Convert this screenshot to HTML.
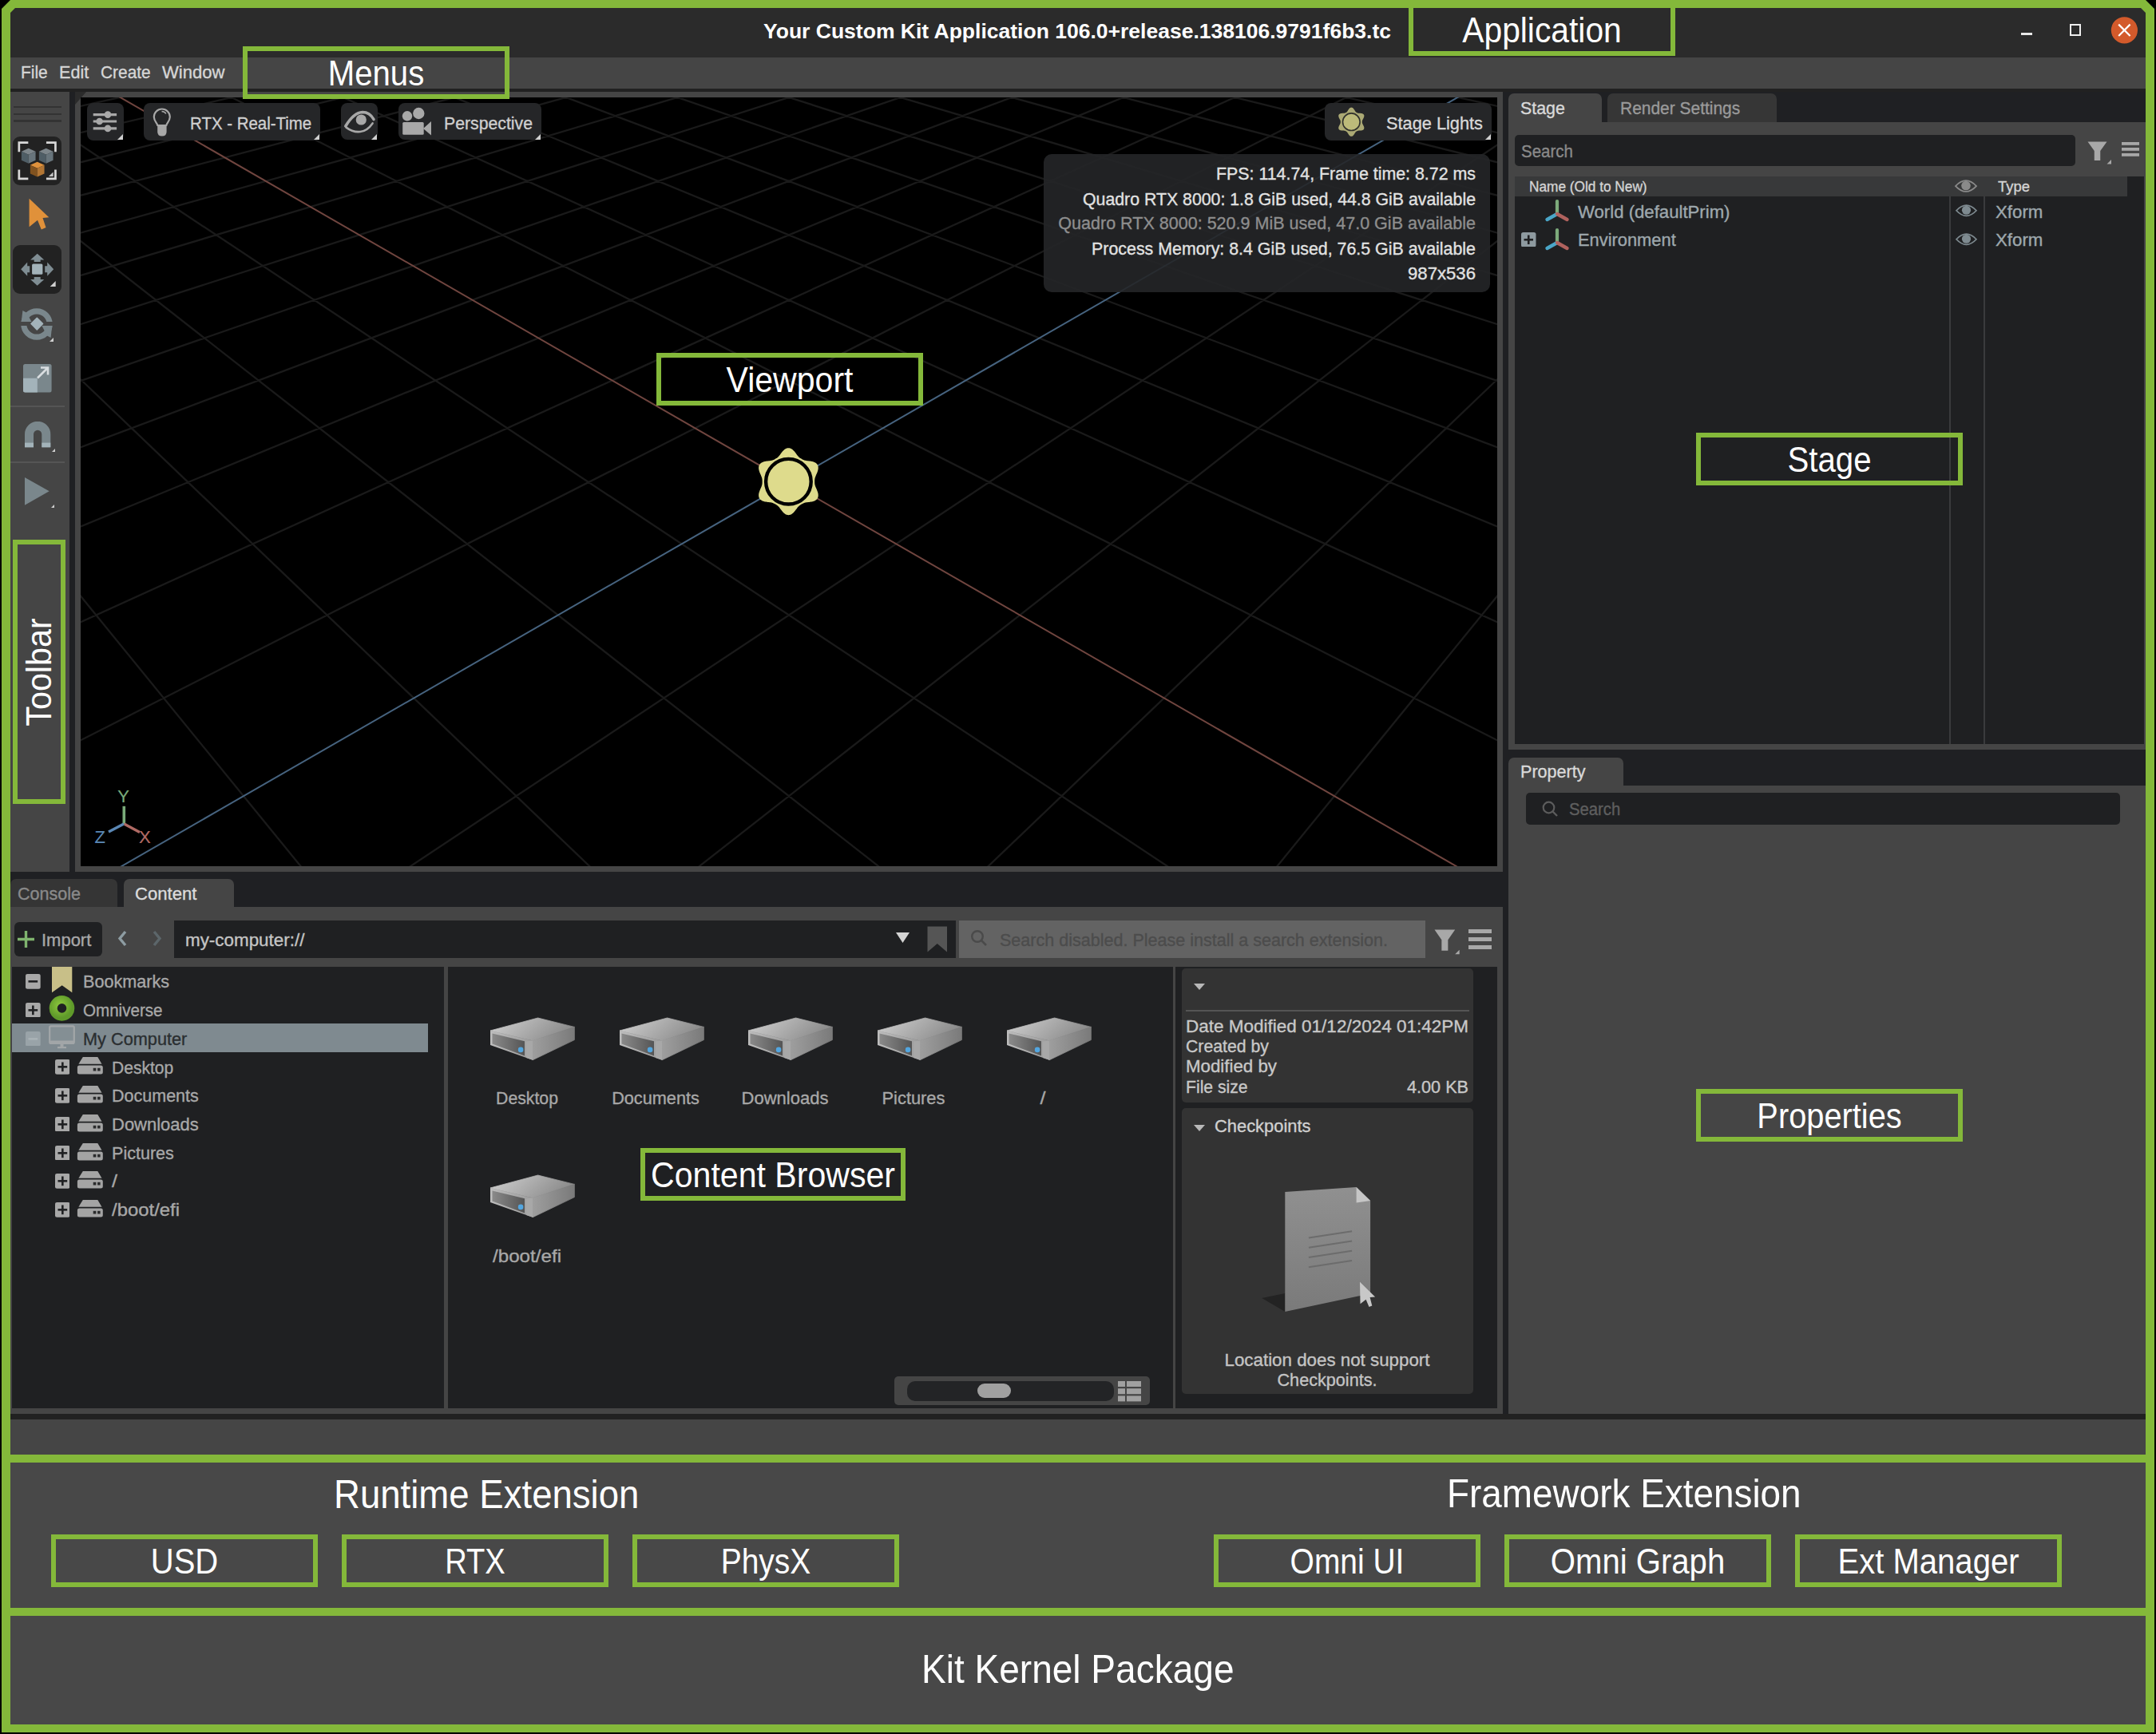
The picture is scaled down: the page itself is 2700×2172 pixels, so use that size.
<!DOCTYPE html><html><head><meta charset="utf-8"><style>html,body{margin:0;padding:0;}body{width:2700px;height:2172px;position:relative;overflow:hidden;background:#000;font-family:"Liberation Sans",sans-serif;}div,svg{box-sizing:border-box;}</style></head><body><div style="position:absolute;left:2px;top:0;width:2696px;height:2170px;background:#84b83a;clip-path:polygon(11px 0,2685px 0,2696px 11px,2696px 2170px,0 2170px,0 11px)"></div><div style="position:absolute;left:13px;top:10px;width:2674px;height:62px;background:#2b2b2b;clip-path:polygon(6px 0,2668px 0,2674px 6px,2674px 62px,0 62px,0 6px)"></div><div style="position:absolute;left:13px;top:72px;width:2674px;height:39px;background:#454545;"></div><div style="position:absolute;left:13px;top:111px;width:2674px;height:4px;background:#212121;"></div><div style="position:absolute;left:13px;top:115px;width:2674px;height:1663px;background:#1f2023;"></div><div style="position:absolute;left:13px;top:115px;width:74px;height:977px;background:#454545;"></div><div style="position:absolute;left:94px;top:115px;width:1788px;height:977px;background:#454545;"></div><svg style="position:absolute;left:94px;top:115px" width="16" height="16"><path d="M0 0H14L0 16Z" fill="#2b2b2b"/></svg><div style="position:absolute;left:101px;top:122px;width:1774px;height:963px;background:#000;"></div><div style="position:absolute;left:1889px;top:153px;width:798px;height:786px;background:#454545;"></div><div style="position:absolute;left:1889px;top:984px;width:798px;height:787px;background:#454545;"></div><div style="position:absolute;left:13px;top:1136px;width:1869px;height:635px;background:#454545;"></div><div style="position:absolute;left:13px;top:1771px;width:2674px;height:7px;background:#212121;"></div><div style="position:absolute;left:13px;top:1778px;width:2674px;height:44px;background:#454545;"></div><div style="position:absolute;left:13px;top:1832px;width:2674px;height:182px;background:#484848;"></div><div style="position:absolute;left:13px;top:2024px;width:2674px;height:136px;background:#484848;"></div><div style="position:absolute;left:956px;top:26.48px;font-size:26.5px;line-height:1;color:#fff;font-weight:bold;white-space:nowrap;transform:scaleX(1.0003);transform-origin:left;">Your Custom Kit Application 106.0+release.138106.9791f6b3.tc</div><div style="position:absolute;left:2531px;top:40.5px;width:14px;height:3.0px;background:#e8e8e8;"></div><div style="position:absolute;left:2592px;top:30px;width:14px;height:15px;border:2px solid #eee;box-sizing:border-box"></div><svg style="position:absolute;left:2640px;top:17px;" width="42" height="42" viewBox="0 0 42 42"><circle cx="20.4" cy="20.8" r="16.6" fill="#d35a2b"/><path d="M13.2 13.6L27.6 28M27.6 13.6L13.2 28" stroke="#fff" stroke-width="2.2"/></svg><div style="position:absolute;left:25.9px;top:79.30px;font-size:22.7px;line-height:1;color:#d6d6d6;font-weight:normal;white-space:nowrap;transform:scaleX(0.9240);transform-origin:left;-webkit-text-stroke:0.35px #d6d6d6;">File</div><div style="position:absolute;left:74.3px;top:79.30px;font-size:22.7px;line-height:1;color:#d6d6d6;font-weight:normal;white-space:nowrap;transform:scaleX(0.9510);transform-origin:left;-webkit-text-stroke:0.35px #d6d6d6;">Edit</div><div style="position:absolute;left:126px;top:79.30px;font-size:22.7px;line-height:1;color:#d6d6d6;font-weight:normal;white-space:nowrap;transform:scaleX(0.9202);transform-origin:left;-webkit-text-stroke:0.35px #d6d6d6;">Create</div><div style="position:absolute;left:203.3px;top:79.30px;font-size:22.7px;line-height:1;color:#d6d6d6;font-weight:normal;white-space:nowrap;transform:scaleX(0.9723);transform-origin:left;-webkit-text-stroke:0.35px #d6d6d6;">Window</div><div style="position:absolute;left:16.5px;top:132.60000000000002px;width:60.5px;height:2.3999999999999773px;background:#333333;"></div><div style="position:absolute;left:16.5px;top:141.5px;width:60.5px;height:2.3999999999999773px;background:#333333;"></div><div style="position:absolute;left:16.5px;top:150.4px;width:60.5px;height:2.3999999999999773px;background:#333333;"></div><div style="position:absolute;left:13px;top:508.2px;width:68px;height:1.6000000000000227px;background:#555555;"></div><div style="position:absolute;left:13px;top:578.4000000000001px;width:68px;height:1.599999999999909px;background:#555555;"></div><div style="position:absolute;left:16.3px;top:170.8px;width:61px;height:61px;border-radius:9px;background:#222222"></div><svg style="position:absolute;left:16.3px;top:170.8px;" width="61" height="61" viewBox="0 0 61 61"><path d="M7.850000000000001 19.149999999999977V7.649999999999977H19.35 M41.95 7.649999999999977H53.45V19.149999999999977 M7.850000000000001 41.44999999999999V52.94999999999999H19.35 M41.95 52.94999999999999H53.45V41.44999999999999" fill="none" stroke="#d8d8d8" stroke-width="2.7"/><path d="M19.7 14.699999999999989 L28.549999999999997 18.69999999999999 L19.7 22.69999999999999 L10.85 18.69999999999999Z" fill="#7c858a"/><path d="M10.85 18.69999999999999 L19.7 22.69999999999999 L19.7 33.69999999999999 L10.85 29.69999999999999Z" fill="#4f5e66"/><path d="M28.549999999999997 18.69999999999999 L19.7 22.69999999999999 L19.7 33.69999999999999 L28.549999999999997 29.69999999999999Z" fill="#68757c"/><path d="M41.7 14.699999999999989 L50.550000000000004 18.69999999999999 L41.7 22.69999999999999 L32.85 18.69999999999999Z" fill="#7c858a"/><path d="M32.85 18.69999999999999 L41.7 22.69999999999999 L41.7 33.69999999999999 L32.85 29.69999999999999Z" fill="#4f5e66"/><path d="M50.550000000000004 18.69999999999999 L41.7 22.69999999999999 L41.7 33.69999999999999 L50.550000000000004 29.69999999999999Z" fill="#68757c"/><path d="M30.7 31.799999999999983 L39.55 35.79999999999998 L30.7 39.79999999999998 L21.85 35.79999999999998Z" fill="#e0923c"/><path d="M21.85 35.79999999999998 L30.7 39.79999999999998 L30.7 50.499999999999986 L21.85 46.499999999999986Z" fill="#80521f"/><path d="M39.55 35.79999999999998 L30.7 39.79999999999998 L30.7 50.499999999999986 L39.55 46.499999999999986Z" fill="#b27634"/><path d="M50.60000000000001 44.39999999999998V50.099999999999994H44.900000000000006Z" fill="#c4c4c4"/></svg><svg style="position:absolute;left:30px;top:245px;" width="36" height="46" viewBox="0 0 36 46"><path d="M6.6 3.7 L31.3 27.2 L23.5 28 L27.5 40 L21.8 42.4 L17 30.8 L6.6 39.2Z" fill="#e0913a"/></svg><div style="position:absolute;left:16.3px;top:307px;width:61px;height:61px;border-radius:9px;background:#222222"></div><svg style="position:absolute;left:16.3px;top:307px;" width="61" height="61" viewBox="0 0 61 61"><rect x="24.099999999999998" y="23.5" width="13.3" height="13.3" rx="1.5" fill="#a3b3ba"/><path d="M30.7 10.800000000000011 L39.3 18.5 H34.7 V21 H26.7 V18.5 H22.099999999999998Z" fill="#7f8d93"/><path d="M30.7 50.80000000000001 L39.3 43 H34.7 V40 H26.7 V43 H22.099999999999998Z" fill="#7f8d93"/><path d="M10.2 30.19999999999999 L18.2 21.600000000000023 V26.19999999999999 H21.2 V34.19999999999999 H18.2 V38.80000000000001Z" fill="#7f8d93"/><path d="M51.2 30.19999999999999 L43.2 21.600000000000023 V26.19999999999999 H40.2 V34.19999999999999 H43.2 V38.80000000000001Z" fill="#7f8d93"/><path d="M53.7 45V52H46.7Z" fill="#cfcfcf"/></svg><svg style="position:absolute;left:24.3px;top:383.8px;" width="44" height="44" viewBox="0 0 44 44"><defs><clipPath id="rc"><rect x="0" y="0" width="44" height="19"/><rect x="0" y="24.1" width="44" height="20"/></clipPath></defs><circle cx="22" cy="22" r="16.2" fill="none" stroke="#7a878c" stroke-width="7.2" clip-path="url(#rc)"/><path d="M2.8 19 L4.4 4.9 L9 7.6 L15.6 19Z" fill="#7a878c"/><path d="M41.2 24.1 L39.6 39.1 L35 36.4 L28.4 24.1Z" fill="#7a878c"/><path d="M22.3 14.2 L29.6 21.5 L22.3 29 L15 21.5Z" fill="#a3b3ba" stroke="#a3b3ba" stroke-width="1.5" stroke-linejoin="round"/><path d="M43 39V44H38Z" fill="#cfcfcf"/></svg><svg style="position:absolute;left:29px;top:456.4px;" width="36" height="36" viewBox="0 0 36 36"><rect x="0" y="0" width="35.6" height="35.6" rx="2.5" fill="#7a878c"/><path d="M0 17.8H17.8V35.6H2.5A2.5 2.5 0 0 1 0 33.1Z" fill="#a3b3ba"/><path d="M18 17.5L31 4.5M22 4.5H31V13.5" fill="none" stroke="#d8dde0" stroke-width="2.6"/></svg><svg style="position:absolute;left:30.7px;top:528.4px;" width="40" height="40" viewBox="0 0 40 40"><path d="M0 32 V16 A16.15 16.15 0 0 1 32.3 16 V32 H21.3 V16 A5.15 5.15 0 0 0 11 16 V32Z" fill="#7a878c"/><rect x="0" y="26.6" width="11" height="5.8" fill="#a3b3ba"/><rect x="21.3" y="26.6" width="11" height="5.8" fill="#a3b3ba"/><path d="M38 34V38H34Z" fill="#cfcfcf"/></svg><svg style="position:absolute;left:31px;top:597.8px;" width="40" height="40" viewBox="0 0 40 40"><path d="M0 0 L30.7 17.35 L0 34.7Z" fill="#7a878c"/><path d="M37 34V38H33Z" fill="#cfcfcf"/></svg><svg style="position:absolute;left:101px;top:122px" width="1774" height="963" viewBox="101 122 1774 963"><path d="M988.0 -327.2L-10298.0 604.0M988.0 -327.2L12274.0 604.0M1006.1 -325.7L-10966.4 681.3M969.9 -325.7L12942.4 681.3M1024.6 -324.2L-11737.1 770.5M951.4 -324.2L13713.1 770.5M1043.5 -322.6L-12635.6 874.4M932.5 -322.6L14611.6 874.4M1062.7 -321.1L-13696.6 997.1M913.3 -321.1L15672.6 997.1M1082.4 -319.4L-14968.6 1144.3M893.6 -319.4L16944.6 1144.3M1102.4 -317.8L-16521.3 1323.9M873.6 -317.8L18497.3 1323.9M1122.8 -316.1L-18459.3 1548.1M853.2 -316.1L20435.3 1548.1M1143.7 -314.4L-19370.8 1682.4M832.3 -314.4L21346.8 1682.4M1164.9 -312.6L-18871.2 1682.4M811.1 -312.6L20847.2 1682.4M1186.7 -310.8L-18371.6 1682.4M789.3 -310.8L20347.6 1682.4M1208.9 -309.0L-17872.0 1682.4M767.1 -309.0L19848.0 1682.4M1231.5 -307.1L-17372.4 1682.4M744.5 -307.1L19348.4 1682.4M1254.7 -305.2L-16872.8 1682.4M721.3 -305.2L18848.8 1682.4M1278.4 -303.3L-16373.2 1682.4M697.6 -303.3L18349.2 1682.4M1302.5 -301.3L-15873.6 1682.4M673.5 -301.3L17849.6 1682.4M1327.3 -299.2L-15374.0 1682.4M648.7 -299.2L17350.0 1682.4M1352.6 -297.1L-14874.4 1682.4M623.4 -297.1L16850.4 1682.4M1378.5 -295.0L-14374.7 1682.4M597.5 -295.0L16350.7 1682.4M1404.9 -292.8L-13875.1 1682.4M571.1 -292.8L15851.1 1682.4M1432.1 -290.6L-13375.5 1682.4M543.9 -290.6L15351.5 1682.4M1459.8 -288.3L-12875.9 1682.4M516.2 -288.3L14851.9 1682.4M1488.2 -286.0L-12376.3 1682.4M487.8 -286.0L14352.3 1682.4M1517.3 -283.5L-11876.7 1682.4M458.7 -283.5L13852.7 1682.4M1547.2 -281.1L-11377.1 1682.4M428.8 -281.1L13353.1 1682.4M1577.7 -278.6L-10877.5 1682.4M398.3 -278.6L12853.5 1682.4M1609.1 -276.0L-10377.9 1682.4M366.9 -276.0L12353.9 1682.4M1641.2 -273.3L-9878.3 1682.4M334.8 -273.3L11854.3 1682.4M1674.2 -270.6L-9378.7 1682.4M301.8 -270.6L11354.7 1682.4M1708.1 -267.8L-8879.1 1682.4M267.9 -267.8L10855.1 1682.4M1742.8 -264.9L-8379.5 1682.4M233.2 -264.9L10355.5 1682.4M1778.5 -262.0L-7879.9 1682.4M197.5 -262.0L9855.9 1682.4M1815.2 -259.0L-7380.3 1682.4M160.8 -259.0L9356.3 1682.4M1852.9 -255.9L-6880.7 1682.4M123.1 -255.9L8856.7 1682.4M1891.6 -252.7L-6381.1 1682.4M84.4 -252.7L8357.1 1682.4M1931.5 -249.4L-5881.5 1682.4M44.5 -249.4L7857.5 1682.4M1972.5 -246.0L-5381.9 1682.4M3.5 -246.0L7357.9 1682.4M2014.7 -242.5L-4882.3 1682.4M-38.7 -242.5L6858.3 1682.4M2058.2 -238.9L-4382.7 1682.4M-82.2 -238.9L6358.7 1682.4M2102.9 -235.2L-3883.1 1682.4M-126.9 -235.2L5859.1 1682.4M2149.1 -231.4L-3383.5 1682.4M-173.1 -231.4L5359.5 1682.4M2196.7 -227.5L-2883.9 1682.4M-220.7 -227.5L4859.9 1682.4M2245.8 -223.4L-2384.3 1682.4M-269.8 -223.4L4360.3 1682.4M2296.5 -219.3L-1884.7 1682.4M-320.5 -219.3L3860.7 1682.4M2348.9 -214.9L-1385.1 1682.4M-372.9 -214.9L3361.1 1682.4M2458.9 -205.9L-385.9 1682.4M-482.9 -205.9L2361.9 1682.4M2516.8 -201.1L113.7 1682.4M-540.8 -201.1L1862.3 1682.4M2576.7 -196.1L613.3 1682.4M-600.7 -196.1L1362.7 1682.4M2638.7 -191.0L1112.9 1682.4M-662.7 -191.0L863.1 1682.4M2703.0 -185.7L1612.5 1682.4M-727.0 -185.7L363.5 1682.4M2769.6 -180.2L2112.1 1682.4M-793.6 -180.2L-136.1 1682.4M2838.8 -174.5L2611.7 1682.4M-862.8 -174.5L-635.7 1682.4M2910.6 -168.6L3111.3 1682.4M-934.6 -168.6L-1135.3 1682.4M2985.3 -162.4L3610.9 1682.4M-1009.3 -162.4L-1634.9 1682.4M3062.9 -156.0L4110.5 1682.4M-1086.9 -156.0L-2134.5 1682.4M3143.7 -149.4L4610.1 1682.4M-1167.7 -149.4L-2634.1 1682.4M3227.8 -142.4L5109.7 1682.4M-1251.8 -142.4L-3133.7 1682.4M3315.6 -135.2L5609.3 1682.4M-1339.6 -135.2L-3633.3 1682.4M3407.1 -127.6L6108.9 1682.4M-1431.1 -127.6L-4132.9 1682.4M3502.7 -119.7L6608.5 1682.4M-1526.7 -119.7L-4632.5 1682.4M3602.6 -111.5L7108.1 1682.4M-1626.6 -111.5L-5132.1 1682.4M3707.2 -102.9L7607.7 1682.4M-1731.2 -102.9L-5631.7 1682.4M3816.8 -93.8L8107.3 1682.4M-1840.8 -93.8L-6131.3 1682.4M3931.7 -84.3L8606.9 1682.4M-1955.7 -84.3L-6630.9 1682.4M4052.3 -74.4L9106.5 1682.4M-2076.3 -74.4L-7130.5 1682.4M4179.1 -63.9L9606.1 1682.4M-2203.1 -63.9L-7630.1 1682.4M4312.5 -52.9L10105.7 1682.4M-2336.5 -52.9L-8129.7 1682.4M4453.2 -41.3L10605.3 1682.4M-2477.2 -41.3L-8629.3 1682.4M4601.7 -29.1L11104.9 1682.4M-2625.7 -29.1L-9128.9 1682.4M4758.6 -16.1L11604.5 1682.4M-2782.6 -16.1L-9628.5 1682.4M4924.8 -2.4L12104.1 1682.4M-2948.8 -2.4L-10128.1 1682.4M5101.0 12.1L12603.7 1682.4M-3125.0 12.1L-10627.7 1682.4M5288.2 27.6L13103.3 1682.4M-3312.2 27.6L-11127.3 1682.4M5487.4 44.0L13602.9 1682.4M-3511.4 44.0L-11626.9 1682.4M5699.9 61.6L14102.5 1682.4M-3723.9 61.6L-12126.5 1682.4M5927.1 80.3L14602.1 1682.4M-3951.1 80.3L-12626.1 1682.4M6170.4 100.4L15101.7 1682.4M-4194.4 100.4L-13125.7 1682.4M6431.7 121.9L15601.3 1682.4M-4455.7 121.9L-13625.3 1682.4M6713.0 145.2L16100.9 1682.4M-4737.0 145.2L-14124.9 1682.4M7016.8 170.2L16600.5 1682.4M-5040.8 170.2L-14624.5 1682.4M7345.9 197.4L17100.2 1682.4M-5369.9 197.4L-15124.2 1682.4M7703.5 226.9L17599.8 1682.4M-5727.5 226.9L-15623.8 1682.4M8093.5 259.1L18099.4 1682.4M-6117.5 259.1L-16123.4 1682.4M8520.6 294.3L18599.0 1682.4M-6544.6 294.3L-16623.0 1682.4M8990.3 333.1L19098.6 1682.4M-7014.3 333.1L-17122.6 1682.4M9509.2 375.9L19598.2 1682.4M-7533.2 375.9L-17622.2 1682.4M10085.6 423.4L20097.8 1682.4M-8109.6 423.4L-18121.8 1682.4M10729.5 476.6L20597.4 1682.4M-8753.5 476.6L-18621.4 1682.4M11453.7 536.3L21097.0 1682.4M-9477.7 536.3L-19121.0 1682.4M12274.0 604.0L21596.6 1682.4M-10298.0 604.0L-19620.6 1682.4" stroke="#1a1a1a" stroke-width="2.3" fill="none"/><path d="M2403.0 -210.5L-885.5 1682.4" stroke="#46637f" stroke-width="2"/><path d="M-427.0 -210.5L2861.5 1682.4" stroke="#70453f" stroke-width="2"/></svg><svg style="position:absolute;left:101px;top:122px" width="1774" height="963" viewBox="101 122 1774 963"><path d="M1020.20 603.20L1020.20 602.34L1020.22 601.48L1020.28 600.61L1020.40 599.73L1020.60 598.83L1020.87 597.90L1021.22 596.93L1021.63 595.92L1022.08 594.87L1022.57 593.78L1023.06 592.64L1023.53 591.46L1023.96 590.25L1024.31 589.03L1024.57 587.80L1024.70 586.59L1024.70 585.41L1024.55 584.27L1024.24 583.20L1023.77 582.20L1023.15 581.29L1022.37 580.49L1021.46 579.79L1020.44 579.20L1019.32 578.71L1018.13 578.32L1016.89 578.01L1015.63 577.78L1014.38 577.60L1013.15 577.45L1011.95 577.33L1010.81 577.20L1009.74 577.05L1008.73 576.86L1007.79 576.63L1006.91 576.35L1006.08 576.02L1005.30 575.64L1004.54 575.23L1003.80 574.79L1003.06 574.37L1002.32 573.92L1001.60 573.43L1000.90 572.88L1000.22 572.26L999.55 571.56L998.88 570.78L998.21 569.92L997.53 569.00L996.82 568.03L996.08 567.04L995.30 566.04L994.47 565.07L993.58 564.15L992.65 563.31L991.67 562.59L990.64 562.00L989.58 561.56L988.50 561.29L987.40 561.20L986.30 561.29L985.22 561.56L984.16 562.00L983.13 562.59L982.15 563.31L981.22 564.15L980.33 565.07L979.50 566.04L978.72 567.04L977.98 568.03L977.27 569.00L976.59 569.92L975.92 570.78L975.25 571.56L974.58 572.26L973.90 572.88L973.20 573.43L972.48 573.92L971.74 574.37L971.00 574.79L970.26 575.23L969.50 575.64L968.72 576.02L967.89 576.35L967.01 576.63L966.07 576.86L965.06 577.05L963.99 577.20L962.85 577.33L961.65 577.45L960.42 577.60L959.17 577.78L957.91 578.01L956.67 578.32L955.48 578.71L954.36 579.20L953.34 579.79L952.43 580.49L951.65 581.29L951.03 582.20L950.56 583.20L950.25 584.27L950.10 585.41L950.10 586.59L950.23 587.80L950.49 589.03L950.84 590.25L951.27 591.46L951.74 592.64L952.23 593.78L952.72 594.87L953.17 595.92L953.58 596.93L953.93 597.90L954.20 598.83L954.40 599.73L954.52 600.61L954.58 601.48L954.60 602.34L954.60 603.20L954.60 604.06L954.58 604.92L954.52 605.79L954.40 606.67L954.20 607.57L953.93 608.50L953.58 609.47L953.17 610.48L952.72 611.53L952.23 612.62L951.74 613.76L951.27 614.94L950.84 616.15L950.49 617.37L950.23 618.60L950.10 619.81L950.10 620.99L950.25 622.13L950.56 623.20L951.03 624.20L951.65 625.11L952.43 625.91L953.34 626.61L954.36 627.20L955.48 627.69L956.67 628.08L957.91 628.39L959.17 628.62L960.42 628.80L961.65 628.95L962.85 629.07L963.99 629.20L965.06 629.35L966.07 629.54L967.01 629.77L967.89 630.05L968.72 630.38L969.50 630.76L970.26 631.17L971.00 631.61L971.74 632.03L972.48 632.48L973.20 632.97L973.90 633.52L974.58 634.14L975.25 634.84L975.92 635.62L976.59 636.48L977.27 637.40L977.98 638.37L978.72 639.36L979.50 640.36L980.33 641.33L981.22 642.25L982.15 643.09L983.13 643.81L984.16 644.40L985.22 644.84L986.30 645.11L987.40 645.20L988.50 645.11L989.58 644.84L990.64 644.40L991.67 643.81L992.65 643.09L993.58 642.25L994.47 641.33L995.30 640.36L996.08 639.36L996.82 638.37L997.53 637.40L998.21 636.48L998.88 635.62L999.55 634.84L1000.22 634.14L1000.90 633.52L1001.60 632.97L1002.32 632.48L1003.06 632.03L1003.80 631.61L1004.54 631.17L1005.30 630.76L1006.08 630.38L1006.91 630.05L1007.79 629.77L1008.73 629.54L1009.74 629.35L1010.81 629.20L1011.95 629.07L1013.15 628.95L1014.38 628.80L1015.63 628.62L1016.89 628.39L1018.13 628.08L1019.32 627.69L1020.44 627.20L1021.46 626.61L1022.37 625.91L1023.15 625.11L1023.77 624.20L1024.24 623.20L1024.55 622.13L1024.70 620.99L1024.70 619.81L1024.57 618.60L1024.31 617.37L1023.96 616.15L1023.53 614.94L1023.06 613.76L1022.57 612.62L1022.08 611.53L1021.63 610.48L1021.22 609.47L1020.87 608.50L1020.60 607.57L1020.40 606.67L1020.28 605.79L1020.22 604.92L1020.20 604.06Z" fill="#dedb8c"/><circle cx="987.4" cy="603.2" r="28.3" fill="#dedb8c" stroke="#000" stroke-width="4.4"/></svg><div style="position:absolute;left:108.9px;top:129.4px;width:46.0px;height:46.29999999999998px;border-radius:8px;background:#252628"></div><svg style="position:absolute;left:145.9px;top:166.7px;" width="9" height="9" viewBox="0 0 9 9"><path d="M8 1V8H1Z" fill="#d0d0d0"/></svg><svg style="position:absolute;left:108.9px;top:129.4px;" width="46" height="46" viewBox="0 0 46 46"><g stroke="#a8a8a8" stroke-width="3.2"><path d="M7.7 14.6H37.1M7.7 23H37.1M7.7 31.9H37.1"/></g><g fill="#a8a8a8"><circle cx="26" cy="14.6" r="4.3"/><circle cx="15.6" cy="23" r="4.3"/><circle cx="26" cy="31.9" r="4.3"/></g></svg><div style="position:absolute;left:180.1px;top:129.4px;width:220.50000000000003px;height:46.29999999999998px;border-radius:8px;background:#252628"></div><svg style="position:absolute;left:391.6px;top:166.7px;" width="9" height="9" viewBox="0 0 9 9"><path d="M8 1V8H1Z" fill="#d0d0d0"/></svg><svg style="position:absolute;left:188px;top:133px;" width="30" height="40" viewBox="0 0 30 40"><path d="M9.3 24 C8.8 21 5 19 4.8 13.5 A10 10 0 0 1 24.8 13.5 C24.6 19 20.8 21 20.3 24Z" fill="none" stroke="#a8a8a8" stroke-width="2.2"/><path d="M9.2 23.5 H20.6 V32 Q20.6 37.5 14.9 37.5 Q9.2 37.5 9.2 32Z" fill="#a8a8a8"/><path d="M14.5 6.5 Q18.5 6.8 19.8 9.5" fill="none" stroke="#a8a8a8" stroke-width="1.6"/></svg><div style="position:absolute;left:238px;top:143.90px;font-size:22px;line-height:1;color:#cfcfcf;font-weight:normal;white-space:nowrap;transform:scaleX(0.9292);transform-origin:left;-webkit-text-stroke:0.35px #cfcfcf;">RTX - Real-Time</div><div style="position:absolute;left:426.5px;top:129.1px;width:46.5px;height:46.400000000000006px;border-radius:8px;background:#252628"></div><svg style="position:absolute;left:464px;top:166.5px;" width="9" height="9" viewBox="0 0 9 9"><path d="M8 1V8H1Z" fill="#d0d0d0"/></svg><svg style="position:absolute;left:426.5px;top:129.1px;" width="47" height="47" viewBox="0 0 47 47"><path d="M5.8 29 Q16 12 27 11.5 Q36 11.5 41 20.5" fill="none" stroke="#a8a8a8" stroke-width="3.6" stroke-linecap="round"/><path d="M6.5 30.6 Q15 37 24 36 Q33 35 39.6 25.4" fill="none" stroke="#a8a8a8" stroke-width="2.6" stroke-linecap="round"/><circle cx="25.3" cy="21" r="6.6" fill="#a8a8a8"/></svg><div style="position:absolute;left:498.6px;top:129.1px;width:179.19999999999993px;height:46.400000000000006px;border-radius:8px;background:#252628"></div><svg style="position:absolute;left:668.8px;top:166.5px;" width="9" height="9" viewBox="0 0 9 9"><path d="M8 1V8H1Z" fill="#d0d0d0"/></svg><svg style="position:absolute;left:498.6px;top:129.1px;" width="46" height="46" viewBox="0 0 46 46"><circle cx="11" cy="16.3" r="6.2" fill="#a8a8a8"/><circle cx="25.3" cy="13" r="7.2" fill="#a8a8a8"/><rect x="5.2" y="24.1" width="26.5" height="15.6" rx="1.5" fill="#a8a8a8"/><path d="M31 31.9 L41 23 V40.5Z" fill="#a8a8a8"/></svg><div style="position:absolute;left:556.4px;top:143.70px;font-size:22px;line-height:1;color:#cfcfcf;font-weight:normal;white-space:nowrap;transform:scaleX(0.9657);transform-origin:left;-webkit-text-stroke:0.35px #cfcfcf;">Perspective</div><div style="position:absolute;left:1659px;top:129px;width:209px;height:47px;border-radius:8px;background:#252628"></div><svg style="position:absolute;left:1859px;top:167px;" width="9" height="9" viewBox="0 0 9 9"><path d="M8 1V8H1Z" fill="#d0d0d0"/></svg><svg style="position:absolute;left:1659px;top:129px;" width="60" height="47" viewBox="0 0 60 47"><path d="M46.80 23.70L46.80 23.35L46.82 22.99L46.86 22.63L46.94 22.27L47.06 21.89L47.22 21.50L47.41 21.08L47.64 20.65L47.88 20.20L48.14 19.72L48.41 19.22L48.66 18.71L48.89 18.18L49.08 17.64L49.23 17.10L49.32 16.57L49.35 16.05L49.30 15.55L49.17 15.08L48.98 14.65L48.70 14.26L48.36 13.92L47.95 13.63L47.49 13.39L46.98 13.20L46.44 13.06L45.88 12.96L45.30 12.89L44.73 12.85L44.17 12.83L43.62 12.82L43.11 12.81L42.62 12.79L42.17 12.75L41.75 12.69L41.36 12.60L41.01 12.49L40.67 12.35L40.36 12.18L40.05 12.01L39.74 11.83L39.45 11.64L39.16 11.42L38.88 11.17L38.61 10.88L38.35 10.55L38.09 10.17L37.83 9.76L37.56 9.32L37.28 8.86L36.98 8.38L36.66 7.90L36.31 7.44L35.94 7.00L35.55 6.60L35.13 6.26L34.69 5.98L34.24 5.77L33.77 5.64L33.30 5.60L32.83 5.64L32.36 5.77L31.91 5.98L31.47 6.26L31.05 6.60L30.66 7.00L30.29 7.44L29.94 7.90L29.62 8.38L29.32 8.86L29.04 9.32L28.77 9.76L28.51 10.17L28.25 10.55L27.99 10.88L27.72 11.17L27.44 11.42L27.15 11.64L26.86 11.83L26.55 12.01L26.24 12.18L25.93 12.35L25.59 12.49L25.24 12.60L24.85 12.69L24.43 12.75L23.98 12.79L23.49 12.81L22.98 12.82L22.43 12.83L21.87 12.85L21.30 12.89L20.72 12.96L20.16 13.06L19.62 13.20L19.11 13.39L18.65 13.63L18.24 13.92L17.90 14.26L17.62 14.65L17.43 15.08L17.30 15.55L17.25 16.05L17.28 16.57L17.37 17.10L17.52 17.64L17.71 18.18L17.94 18.71L18.19 19.22L18.46 19.72L18.72 20.20L18.96 20.65L19.19 21.08L19.38 21.50L19.54 21.89L19.66 22.27L19.74 22.63L19.78 22.99L19.80 23.35L19.80 23.70L19.80 24.05L19.78 24.41L19.74 24.77L19.66 25.13L19.54 25.51L19.38 25.90L19.19 26.32L18.96 26.75L18.72 27.20L18.46 27.68L18.19 28.18L17.94 28.69L17.71 29.22L17.52 29.76L17.37 30.30L17.28 30.83L17.25 31.35L17.30 31.85L17.43 32.32L17.62 32.75L17.90 33.14L18.24 33.48L18.65 33.77L19.11 34.01L19.62 34.20L20.16 34.34L20.72 34.44L21.30 34.51L21.87 34.55L22.43 34.57L22.98 34.58L23.49 34.59L23.98 34.61L24.43 34.65L24.85 34.71L25.24 34.80L25.59 34.91L25.93 35.05L26.24 35.22L26.55 35.39L26.86 35.57L27.15 35.76L27.44 35.98L27.72 36.23L27.99 36.52L28.25 36.85L28.51 37.23L28.77 37.64L29.04 38.08L29.32 38.54L29.62 39.02L29.94 39.50L30.29 39.96L30.66 40.40L31.05 40.80L31.47 41.14L31.91 41.42L32.36 41.63L32.83 41.76L33.30 41.80L33.77 41.76L34.24 41.63L34.69 41.42L35.13 41.14L35.55 40.80L35.94 40.40L36.31 39.96L36.66 39.50L36.98 39.02L37.28 38.54L37.56 38.08L37.83 37.64L38.09 37.23L38.35 36.85L38.61 36.52L38.88 36.23L39.16 35.98L39.45 35.76L39.74 35.57L40.05 35.39L40.36 35.22L40.67 35.05L41.01 34.91L41.36 34.80L41.75 34.71L42.17 34.65L42.62 34.61L43.11 34.59L43.62 34.58L44.17 34.57L44.73 34.55L45.30 34.51L45.88 34.44L46.44 34.34L46.98 34.20L47.49 34.01L47.95 33.77L48.36 33.48L48.70 33.14L48.98 32.75L49.17 32.32L49.30 31.85L49.35 31.35L49.32 30.83L49.23 30.30L49.08 29.76L48.89 29.22L48.66 28.69L48.41 28.18L48.14 27.68L47.88 27.20L47.64 26.75L47.41 26.32L47.22 25.90L47.06 25.51L46.94 25.13L46.86 24.77L46.82 24.41L46.80 24.05Z" fill="#aba974"/><circle cx="33.299999999999955" cy="23.69999999999999" r="10.8" fill="#bdbb7a" stroke="#30312c" stroke-width="1.6"/></svg><div style="position:absolute;left:1735.6px;top:143.80px;font-size:22px;line-height:1;color:#d8d8d8;font-weight:normal;white-space:nowrap;transform:scaleX(0.9893);transform-origin:left;-webkit-text-stroke:0.35px #d8d8d8;">Stage Lights</div><div style="position:absolute;left:1307px;top:193px;width:558.5px;height:173px;border-radius:10px;background:rgba(37,38,40,0.9)"></div><div style="position:absolute;left:1847.7px;top:206.58px;font-size:22.5px;line-height:1;color:#e2e2e2;font-weight:normal;white-space:nowrap;transform:translateX(-100%) scaleX(0.9497);transform-origin:right;-webkit-text-stroke:0.35px #e2e2e2;">FPS: 114.74, Frame time: 8.72 ms</div><div style="position:absolute;left:1847.7px;top:238.57px;font-size:22.5px;line-height:1;color:#e2e2e2;font-weight:normal;white-space:nowrap;transform:translateX(-100%) scaleX(0.9463);transform-origin:right;-webkit-text-stroke:0.35px #e2e2e2;">Quadro RTX 8000: 1.8 GiB used, 44.8 GiB available</div><div style="position:absolute;left:1847.7px;top:269.38px;font-size:22.5px;line-height:1;color:#8e8e8e;font-weight:normal;white-space:nowrap;transform:translateX(-100%) scaleX(0.9570);transform-origin:right;-webkit-text-stroke:0.35px #8e8e8e;">Quadro RTX 8000: 520.9 MiB used, 47.0 GiB available</div><div style="position:absolute;left:1847.7px;top:301.18px;font-size:22.5px;line-height:1;color:#e2e2e2;font-weight:normal;white-space:nowrap;transform:translateX(-100%) scaleX(0.9495);transform-origin:right;-webkit-text-stroke:0.35px #e2e2e2;">Process Memory: 8.4 GiB used, 76.5 GiB available</div><div style="position:absolute;left:1847.7px;top:331.78px;font-size:22.5px;line-height:1;color:#e2e2e2;font-weight:normal;white-space:nowrap;transform:translateX(-100%) scaleX(0.9846);transform-origin:right;-webkit-text-stroke:0.35px #e2e2e2;">987x536</div><svg style="position:absolute;left:115px;top:985px;" width="75" height="75" viewBox="0 0 75 75"><path d="M40.3 47V24.8" stroke="#7aab7a" stroke-width="3.6"/><path d="M40.5 47L60 57.5" stroke="#b06a64" stroke-width="3.4"/><path d="M40 47L21 57" stroke="#5a87b4" stroke-width="3.4"/></svg><div style="position:absolute;left:154.6px;top:987.30px;font-size:22px;line-height:1;color:#7aab7a;font-weight:normal;white-space:nowrap;transform:translateX(-50%) scaleX(1.0000);transform-origin:center;-webkit-text-stroke:0.2px #7aab7a;">Y</div><div style="position:absolute;left:181.4px;top:1037.80px;font-size:22px;line-height:1;color:#b06a64;font-weight:normal;white-space:nowrap;transform:translateX(-50%) scaleX(1.0000);transform-origin:center;-webkit-text-stroke:0.2px #b06a64;">X</div><div style="position:absolute;left:125.3px;top:1037.80px;font-size:22px;line-height:1;color:#5a87b4;font-weight:normal;white-space:nowrap;transform:translateX(-50%) scaleX(1.0000);transform-origin:center;-webkit-text-stroke:0.2px #5a87b4;">Z</div><div style="position:absolute;left:1889px;top:117px;width:117px;height:36px;background:#454545;border-radius:7px 7px 0 0"></div><div style="position:absolute;left:1903.9px;top:124.80px;font-size:22px;line-height:1;color:#d9d9d9;font-weight:normal;white-space:nowrap;transform:scaleX(0.9706);transform-origin:left;-webkit-text-stroke:0.35px #d9d9d9;">Stage</div><div style="position:absolute;left:2013px;top:117px;width:212px;height:36px;background:#363636;border-radius:7px 7px 0 0"></div><div style="position:absolute;left:2028.6px;top:124.80px;font-size:22px;line-height:1;color:#9a9a9a;font-weight:normal;white-space:nowrap;transform:scaleX(0.9521);transform-origin:left;-webkit-text-stroke:0.35px #9a9a9a;">Render Settings</div><div style="position:absolute;left:1897px;top:169px;width:702px;height:39px;border-radius:5px;background:#1f2022"></div><div style="position:absolute;left:1904.5px;top:178.60px;font-size:22px;line-height:1;color:#8a8a8a;font-weight:normal;white-space:nowrap;transform:scaleX(0.9296);transform-origin:left;-webkit-text-stroke:0.35px #8a8a8a;">Search</div><svg style="position:absolute;left:2613.5px;top:177px;" width="31" height="30" viewBox="0 0 31 30"><path d="M0.5 0.5H24.5L16.25 12.0V24H8.75V12.0Z" fill="#a8a8a8"/><path d="M30 23V28.5H24.5Z" fill="#a8a8a8"/></svg><svg style="position:absolute;left:2656.6px;top:178px;" width="22" height="18.8" viewBox="0 0 22 18.8"><rect x="0" y="0" width="22" height="3.8" fill="#a8a8a8"/><rect x="0" y="7" width="22" height="3.8" fill="#a8a8a8"/><rect x="0" y="14" width="22" height="3.8" fill="#a8a8a8"/></svg><div style="position:absolute;left:1897px;top:221px;width:788px;height:711px;background:#1f2022;"></div><div style="position:absolute;left:1897px;top:221px;width:767px;height:25px;background:#38393a;"></div><div style="position:absolute;left:1914.9px;top:224.88px;font-size:18.5px;line-height:1;color:#d4d4d4;font-weight:normal;white-space:nowrap;transform:scaleX(0.9323);transform-origin:left;-webkit-text-stroke:0.35px #d4d4d4;">Name (Old to New)</div><svg style="position:absolute;left:2447.0px;top:222.94px;" width="30" height="20.12" viewBox="0 0 30 20.12"><path d="M2 10.06 Q15.0 -3.6420000000000003 28 10.06 Q15.0 23.762000000000004 2 10.06Z" fill="none" stroke="#8a8a8a" stroke-width="1.8"/><circle cx="15.0" cy="9.56" r="5.8032" fill="#8a8a8a"/></svg><div style="position:absolute;left:2502px;top:224.88px;font-size:18.5px;line-height:1;color:#d4d4d4;font-weight:normal;white-space:nowrap;transform:scaleX(0.9948);transform-origin:left;-webkit-text-stroke:0.35px #d4d4d4;">Type</div><div style="position:absolute;left:2441.3px;top:246px;width:1.5px;height:686px;background:#3a3b3d;"></div><div style="position:absolute;left:2484.3px;top:246px;width:1.5px;height:686px;background:#3a3b3d;"></div><div style="position:absolute;left:1975.7px;top:255.72px;font-size:21.5px;line-height:1;color:#9ea8ad;font-weight:normal;white-space:nowrap;transform:scaleX(1.0309);transform-origin:left;-webkit-text-stroke:0.35px #9ea8ad;">World (defaultPrim)</div><div style="position:absolute;left:1975.7px;top:291.12px;font-size:21.5px;line-height:1;color:#9ea8ad;font-weight:normal;white-space:nowrap;transform:scaleX(1.0166);transform-origin:left;-webkit-text-stroke:0.35px #9ea8ad;">Environment</div><svg style="position:absolute;left:1934.3px;top:249px;" width="32" height="30" viewBox="0 0 32 30"><path d="M16 19V3" stroke="#7dab7b" stroke-width="4.2" stroke-linecap="round"/><path d="M16 19L3.5 26" stroke="#4aa6c8" stroke-width="4.4" stroke-linecap="round"/><path d="M16 19L28.5 26" stroke="#b0625e" stroke-width="4.4" stroke-linecap="round"/></svg><svg style="position:absolute;left:1934.3px;top:285px;" width="32" height="30" viewBox="0 0 32 30"><path d="M16 19V3" stroke="#7dab7b" stroke-width="4.2" stroke-linecap="round"/><path d="M16 19L3.5 26" stroke="#4aa6c8" stroke-width="4.4" stroke-linecap="round"/><path d="M16 19L28.5 26" stroke="#b0625e" stroke-width="4.4" stroke-linecap="round"/></svg><svg style="position:absolute;left:1905px;top:290.5px;" width="18.5" height="18.5" viewBox="0 0 18.5 18.5"><rect x="0" y="0" width="18.5" height="18.5" rx="2.5" fill="#8e9aa0"/><path d="M3.5 9.25H15.0" stroke="#1f2022" stroke-width="2.6"/><path d="M9.25 3.5V15.0" stroke="#1f2022" stroke-width="2.6"/></svg><svg style="position:absolute;left:2447.9px;top:254.25px;" width="29" height="19.5" viewBox="0 0 29 19.5"><path d="M2 9.75 Q14.5 -3.425 27 9.75 Q14.5 22.925 2 9.75Z" fill="none" stroke="#7e8a90" stroke-width="1.8"/><circle cx="14.5" cy="9.25" r="5.58" fill="#7e8a90"/></svg><svg style="position:absolute;left:2447.9px;top:290.25px;" width="29" height="19.5" viewBox="0 0 29 19.5"><path d="M2 9.75 Q14.5 -3.425 27 9.75 Q14.5 22.925 2 9.75Z" fill="none" stroke="#7e8a90" stroke-width="1.8"/><circle cx="14.5" cy="9.25" r="5.58" fill="#7e8a90"/></svg><div style="position:absolute;left:2499px;top:255.72px;font-size:21.5px;line-height:1;color:#9ea8ad;font-weight:normal;white-space:nowrap;transform:scaleX(1.0359);transform-origin:left;-webkit-text-stroke:0.35px #9ea8ad;">Xform</div><div style="position:absolute;left:2499px;top:291.12px;font-size:21.5px;line-height:1;color:#9ea8ad;font-weight:normal;white-space:nowrap;transform:scaleX(1.0359);transform-origin:left;-webkit-text-stroke:0.35px #9ea8ad;">Xform</div><div style="position:absolute;left:1889px;top:949px;width:144px;height:35px;background:#454545;border-radius:7px 7px 0 0"></div><div style="position:absolute;left:1903.9px;top:956.20px;font-size:22px;line-height:1;color:#d9d9d9;font-weight:normal;white-space:nowrap;transform:scaleX(0.9814);transform-origin:left;-webkit-text-stroke:0.35px #d9d9d9;">Property</div><div style="position:absolute;left:1911px;top:993px;width:743.7px;height:39.8px;border-radius:5px;background:#1f2022"></div><svg style="position:absolute;left:1930px;top:1002px;" width="24" height="24" viewBox="0 0 24 24"><circle cx="9.5" cy="9.5" r="6.8" fill="none" stroke="#5c5c5c" stroke-width="2.2"/><path d="M14.5 14.5L20 20" stroke="#5c5c5c" stroke-width="2.4"/></svg><div style="position:absolute;left:1965px;top:1003.10px;font-size:22px;line-height:1;color:#5e5e5e;font-weight:normal;white-space:nowrap;transform:scaleX(0.9224);transform-origin:left;-webkit-text-stroke:0.35px #5e5e5e;">Search</div><svg width="0" height="0" style="position:absolute"><defs>
<linearGradient id="dtop" x1="0" y1="0" x2="1" y2="0.3"><stop offset="0" stop-color="#d2d2d2"/><stop offset="1" stop-color="#8c8c8c"/></linearGradient>
<linearGradient id="dleft" x1="0" y1="0" x2="1" y2="0"><stop offset="0" stop-color="#bdbdbd"/><stop offset="1" stop-color="#9c9c9c"/></linearGradient>
<linearGradient id="dpanel" x1="0" y1="0" x2="1" y2="0"><stop offset="0" stop-color="#8a8a8a"/><stop offset="1" stop-color="#555"/></linearGradient>
<linearGradient id="dright" x1="0" y1="0" x2="1" y2="0"><stop offset="0" stop-color="#9e9e9e"/><stop offset="1" stop-color="#7a7a7a"/></linearGradient>
<linearGradient id="page" x1="0" y1="0" x2="0" y2="1"><stop offset="0" stop-color="#909090"/><stop offset="1" stop-color="#7a7a7a"/></linearGradient>
<radialGradient id="omni" cx="0.4" cy="0.35" r="0.7"><stop offset="0" stop-color="#8fca3e"/><stop offset="1" stop-color="#5f9a2a"/></radialGradient>
<g id="drive">
<path d="M10 26 L69.6 10 L115.4 21.4 L63 38.6Z" fill="url(#dtop)" stroke="url(#dtop)" stroke-width="0.8"/>
<path d="M10 26 L63 38.6 L63 62.8 L10 44.1Z" fill="url(#dleft)"/>
<path d="M12.5 29.5 L53 39.2 L53 57.5 L12.5 42.5Z" fill="url(#dpanel)"/>
<path d="M63 38.6 L115.4 21.4 L115.4 37.6 L63 62.8Z" fill="url(#dright)" stroke="url(#dright)" stroke-width="0.8"/>
<path d="M55 39.5 L63 38.6 L63 62.8 L55 60Z" fill="#a8a8a8"/>
<circle cx="48.1" cy="49.9" r="3.3" fill="#52a6e0"/>
</g>
<g id="sdrive">
<path d="M5.8 0 H24.3 L29.5 8.7 H0.4Z" fill="#a4a4a4"/>
<rect x="-1.1" y="10.6" width="31.9" height="10.8" rx="2.5" fill="#a4a4a4"/>
<rect x="18.7" y="13.8" width="3.7" height="3.7" fill="#2a2b2c"/><rect x="24.1" y="13.8" width="3.5" height="3.7" fill="#2a2b2c"/>
</g>
</defs></svg><div style="position:absolute;left:13px;top:1101px;width:134px;height:35px;background:#353535;border-radius:7px 7px 0 0"></div><div style="position:absolute;left:22.3px;top:1109.10px;font-size:22px;line-height:1;color:#8a8a8a;font-weight:normal;white-space:nowrap;transform:scaleX(0.9787);transform-origin:left;-webkit-text-stroke:0.35px #8a8a8a;">Console</div><div style="position:absolute;left:155px;top:1101px;width:138px;height:35px;background:#454545;border-radius:7px 7px 0 0"></div><div style="position:absolute;left:169.2px;top:1109.10px;font-size:22px;line-height:1;color:#dcdcdc;font-weight:normal;white-space:nowrap;transform:scaleX(1.0045);transform-origin:left;-webkit-text-stroke:0.35px #dcdcdc;">Content</div><div style="position:absolute;left:18px;top:1155px;width:110px;height:43px;border-radius:6px;background:#1f2022"></div><svg style="position:absolute;left:20px;top:1164px;" width="26" height="26" viewBox="0 0 26 26"><path d="M12.5 2V23M2 12.5H23" stroke="#7fb46e" stroke-width="3.4"/></svg><div style="position:absolute;left:51.5px;top:1166.90px;font-size:22px;line-height:1;color:#a8a8a8;font-weight:normal;white-space:nowrap;transform:scaleX(0.9992);transform-origin:left;-webkit-text-stroke:0.35px #a8a8a8;">Import</div><svg style="position:absolute;left:144px;top:1164px;" width="20" height="24" viewBox="0 0 20 24"><path d="M13 3L6 11.5L13 20" fill="none" stroke="#8d9ca2" stroke-width="3.4"/></svg><svg style="position:absolute;left:187px;top:1164px;" width="20" height="24" viewBox="0 0 20 24"><path d="M6 3L13 11.5L6 20" fill="none" stroke="#5c666a" stroke-width="3.4"/></svg><div style="position:absolute;left:218px;top:1153px;width:979px;height:47px;background:#1f2022;"></div><div style="position:absolute;left:232.2px;top:1166.90px;font-size:22px;line-height:1;color:#c4c4c4;font-weight:normal;white-space:nowrap;transform:scaleX(1.0184);transform-origin:left;-webkit-text-stroke:0.35px #c4c4c4;">my-computer://</div><svg style="position:absolute;left:1120px;top:1166px;" width="22" height="17" viewBox="0 0 22 17"><path d="M2 2H19L10.5 15Z" fill="#d4d4d4"/></svg><svg style="position:absolute;left:1160px;top:1160px;" width="28" height="34" viewBox="0 0 28 34"><path d="M1.5 0.5H26V32.5L13.75 22L1.5 32.5Z" fill="#555555"/></svg><div style="position:absolute;left:1201px;top:1153px;width:584px;height:47px;background:#636363;"></div><svg style="position:absolute;left:1214px;top:1163px;" width="26" height="26" viewBox="0 0 26 26"><circle cx="10" cy="10" r="6.8" fill="none" stroke="#4a4a4a" stroke-width="2.4"/><path d="M15 15L21 21" stroke="#4a4a4a" stroke-width="2.6"/></svg><div style="position:absolute;left:1252px;top:1166.50px;font-size:22px;line-height:1;color:#4c4c4c;font-weight:normal;white-space:nowrap;transform:scaleX(0.9788);transform-origin:left;-webkit-text-stroke:0.35px #4c4c4c;">Search disabled. Please install a search extension.</div><svg style="position:absolute;left:1796.2px;top:1164px;" width="32.7" height="32.7" viewBox="0 0 32.7 32.7"><path d="M0.5 0.5H26.2L17.355 13.35V26.7H9.344999999999999V13.35Z" fill="#a8a8a8"/><path d="M31.7 25.7V31.2H26.2Z" fill="#a8a8a8"/></svg><svg style="position:absolute;left:1838.9px;top:1164px;" width="29" height="26" viewBox="0 0 29 26"><rect x="0" y="0" width="29" height="5" fill="#a8a8a8"/><rect x="0" y="10" width="29" height="5" fill="#a8a8a8"/><rect x="0" y="20" width="29" height="5" fill="#a8a8a8"/></svg><div style="position:absolute;left:15px;top:1211px;width:541px;height:553px;background:#1f2022;"></div><div style="position:absolute;left:561px;top:1211px;width:907.5px;height:553px;background:#1f2022;"></div><div style="position:absolute;left:1472px;top:1211px;width:403px;height:553px;background:#1f2022;"></div><div style="position:absolute;left:15px;top:1282.2px;width:520.7px;height:36.200000000000045px;background:#7f8a90;"></div><svg style="position:absolute;left:32.1px;top:1220px;" width="18.7" height="18.7" viewBox="0 0 18.7 18.7"><rect x="0" y="0" width="18.7" height="18.7" rx="2.5" fill="#a8a8a8"/><path d="M3.5 9.35H15.2" stroke="#1f2022" stroke-width="2.6"/></svg><svg style="position:absolute;left:64.9px;top:1210.8px;" width="26" height="33" viewBox="0 0 26 33"><path d="M0 0H25.3V32.2L12.65 23.2L0 32.2Z" fill="#c8bf88"/></svg><div style="position:absolute;left:103.8px;top:1219.28px;font-size:22.5px;line-height:1;color:#a8a8a8;font-weight:normal;white-space:nowrap;transform:scaleX(0.9597);transform-origin:left;-webkit-text-stroke:0.35px #a8a8a8;">Bookmarks</div><svg style="position:absolute;left:32.1px;top:1255.7px;" width="18.7" height="18.7" viewBox="0 0 18.7 18.7"><rect x="0" y="0" width="18.7" height="18.7" rx="2.5" fill="#a8a8a8"/><path d="M3.5 9.35H15.2" stroke="#1f2022" stroke-width="2.6"/><path d="M9.35 3.5V15.2" stroke="#1f2022" stroke-width="2.6"/></svg><svg style="position:absolute;left:61px;top:1246px;" width="34" height="34" viewBox="0 0 34 34"><circle cx="16.5" cy="16.9" r="10.8" fill="none" stroke="url(#omni)" stroke-width="10"/></svg><div style="position:absolute;left:103.8px;top:1255.17px;font-size:22.5px;line-height:1;color:#a8a8a8;font-weight:normal;white-space:nowrap;transform:scaleX(0.9147);transform-origin:left;-webkit-text-stroke:0.35px #a8a8a8;">Omniverse</div><svg style="position:absolute;left:32.1px;top:1291.8px;" width="18.7" height="18.7" viewBox="0 0 18.7 18.7"><rect x="0" y="0" width="18.7" height="18.7" rx="2.5" fill="#99a3a8"/><path d="M3.5 9.35H15.2" stroke="#a9b2b6" stroke-width="2.6"/></svg><svg style="position:absolute;left:61px;top:1283px;" width="34" height="32" viewBox="0 0 34 32"><rect x="1.2" y="2.3" width="30.6" height="21.5" rx="1.5" fill="#848f94" stroke="#a2a6a8" stroke-width="2.2"/><rect x="1.2" y="20.5" width="30.6" height="4.3" fill="#a2a6a8"/><rect x="14.5" y="24.8" width="4" height="4" fill="#a2a6a8"/><rect x="11" y="28" width="11" height="2.2" fill="#a2a6a8"/></svg><div style="position:absolute;left:103.8px;top:1290.67px;font-size:22.5px;line-height:1;color:#2a2e30;font-weight:normal;white-space:nowrap;transform:scaleX(0.9649);transform-origin:left;-webkit-text-stroke:0.35px #2a2e30;">My Computer</div><svg style="position:absolute;left:68.5px;top:1327.4px;" width="18.7" height="18.7" viewBox="0 0 18.7 18.7"><rect x="0" y="0" width="18.7" height="18.7" rx="2.5" fill="#a8a8a8"/><path d="M3.5 9.35H15.2" stroke="#1f2022" stroke-width="2.6"/><path d="M9.35 3.5V15.2" stroke="#1f2022" stroke-width="2.6"/></svg><svg style="position:absolute;left:98.4px;top:1324.4px;overflow:visible" width="32" height="26"><use href="#sdrive"/></svg><div style="position:absolute;left:139.6px;top:1326.67px;font-size:22.5px;line-height:1;color:#a8a8a8;font-weight:normal;white-space:nowrap;transform:scaleX(0.9365);transform-origin:left;-webkit-text-stroke:0.35px #a8a8a8;">Desktop</div><svg style="position:absolute;left:68.5px;top:1363.1000000000001px;" width="18.7" height="18.7" viewBox="0 0 18.7 18.7"><rect x="0" y="0" width="18.7" height="18.7" rx="2.5" fill="#a8a8a8"/><path d="M3.5 9.35H15.2" stroke="#1f2022" stroke-width="2.6"/><path d="M9.35 3.5V15.2" stroke="#1f2022" stroke-width="2.6"/></svg><svg style="position:absolute;left:98.4px;top:1360.1px;overflow:visible" width="32" height="26"><use href="#sdrive"/></svg><div style="position:absolute;left:139.6px;top:1362.38px;font-size:22.5px;line-height:1;color:#a8a8a8;font-weight:normal;white-space:nowrap;transform:scaleX(0.9561);transform-origin:left;-webkit-text-stroke:0.35px #a8a8a8;">Documents</div><svg style="position:absolute;left:68.5px;top:1398.8000000000002px;" width="18.7" height="18.7" viewBox="0 0 18.7 18.7"><rect x="0" y="0" width="18.7" height="18.7" rx="2.5" fill="#a8a8a8"/><path d="M3.5 9.35H15.2" stroke="#1f2022" stroke-width="2.6"/><path d="M9.35 3.5V15.2" stroke="#1f2022" stroke-width="2.6"/></svg><svg style="position:absolute;left:98.4px;top:1395.8px;overflow:visible" width="32" height="26"><use href="#sdrive"/></svg><div style="position:absolute;left:139.6px;top:1398.08px;font-size:22.5px;line-height:1;color:#a8a8a8;font-weight:normal;white-space:nowrap;transform:scaleX(0.9774);transform-origin:left;-webkit-text-stroke:0.35px #a8a8a8;">Downloads</div><svg style="position:absolute;left:68.5px;top:1434.5px;" width="18.7" height="18.7" viewBox="0 0 18.7 18.7"><rect x="0" y="0" width="18.7" height="18.7" rx="2.5" fill="#a8a8a8"/><path d="M3.5 9.35H15.2" stroke="#1f2022" stroke-width="2.6"/><path d="M9.35 3.5V15.2" stroke="#1f2022" stroke-width="2.6"/></svg><svg style="position:absolute;left:98.4px;top:1431.5px;overflow:visible" width="32" height="26"><use href="#sdrive"/></svg><div style="position:absolute;left:139.6px;top:1433.77px;font-size:22.5px;line-height:1;color:#a8a8a8;font-weight:normal;white-space:nowrap;transform:scaleX(0.9584);transform-origin:left;-webkit-text-stroke:0.35px #a8a8a8;">Pictures</div><svg style="position:absolute;left:68.5px;top:1470.2px;" width="18.7" height="18.7" viewBox="0 0 18.7 18.7"><rect x="0" y="0" width="18.7" height="18.7" rx="2.5" fill="#a8a8a8"/><path d="M3.5 9.35H15.2" stroke="#1f2022" stroke-width="2.6"/><path d="M9.35 3.5V15.2" stroke="#1f2022" stroke-width="2.6"/></svg><svg style="position:absolute;left:98.4px;top:1467.2px;overflow:visible" width="32" height="26"><use href="#sdrive"/></svg><div style="position:absolute;left:139.6px;top:1469.47px;font-size:22.5px;line-height:1;color:#a8a8a8;font-weight:normal;white-space:nowrap;transform:scaleX(1.1192);transform-origin:left;-webkit-text-stroke:0.35px #a8a8a8;">/</div><svg style="position:absolute;left:68.5px;top:1505.9px;" width="18.7" height="18.7" viewBox="0 0 18.7 18.7"><rect x="0" y="0" width="18.7" height="18.7" rx="2.5" fill="#a8a8a8"/><path d="M3.5 9.35H15.2" stroke="#1f2022" stroke-width="2.6"/><path d="M9.35 3.5V15.2" stroke="#1f2022" stroke-width="2.6"/></svg><svg style="position:absolute;left:98.4px;top:1502.9px;overflow:visible" width="32" height="26"><use href="#sdrive"/></svg><div style="position:absolute;left:139.6px;top:1505.17px;font-size:22.5px;line-height:1;color:#a8a8a8;font-weight:normal;white-space:nowrap;transform:scaleX(1.0617);transform-origin:left;-webkit-text-stroke:0.35px #a8a8a8;">/boot/efi</div><svg style="position:absolute;left:604.3px;top:1264.6px" width="126" height="75"><use href="#drive"/></svg><div style="position:absolute;left:660.0px;top:1364.90px;font-size:22px;line-height:1;color:#a8a8a8;font-weight:normal;white-space:nowrap;transform:translateX(-50%) scaleX(0.9652);transform-origin:center;-webkit-text-stroke:0.35px #a8a8a8;">Desktop</div><svg style="position:absolute;left:765.6px;top:1264.6px" width="126" height="75"><use href="#drive"/></svg><div style="position:absolute;left:821.3000000000001px;top:1364.90px;font-size:22px;line-height:1;color:#a8a8a8;font-weight:normal;white-space:nowrap;transform:translateX(-50%) scaleX(0.9859);transform-origin:center;-webkit-text-stroke:0.35px #a8a8a8;">Documents</div><svg style="position:absolute;left:927.3px;top:1264.6px" width="126" height="75"><use href="#drive"/></svg><div style="position:absolute;left:983.0px;top:1364.90px;font-size:22px;line-height:1;color:#a8a8a8;font-weight:normal;white-space:nowrap;transform:translateX(-50%) scaleX(0.9996);transform-origin:center;-webkit-text-stroke:0.35px #a8a8a8;">Downloads</div><svg style="position:absolute;left:1088.7px;top:1264.6px" width="126" height="75"><use href="#drive"/></svg><div style="position:absolute;left:1144.4px;top:1364.90px;font-size:22px;line-height:1;color:#a8a8a8;font-weight:normal;white-space:nowrap;transform:translateX(-50%) scaleX(0.9928);transform-origin:center;-webkit-text-stroke:0.35px #a8a8a8;">Pictures</div><svg style="position:absolute;left:1250.5px;top:1264.6px" width="126" height="75"><use href="#drive"/></svg><div style="position:absolute;left:1306.2px;top:1364.90px;font-size:22px;line-height:1;color:#a8a8a8;font-weight:normal;white-space:nowrap;transform:translateX(-50%) scaleX(1.1447);transform-origin:center;-webkit-text-stroke:0.35px #a8a8a8;">/</div><svg style="position:absolute;left:604.3px;top:1462.2px" width="126" height="75"><use href="#drive"/></svg><div style="position:absolute;left:660.0px;top:1562.50px;font-size:22px;line-height:1;color:#a8a8a8;font-weight:normal;white-space:nowrap;transform:translateX(-50%) scaleX(1.0986);transform-origin:center;-webkit-text-stroke:0.35px #a8a8a8;">/boot/efi</div><div style="position:absolute;left:1120px;top:1724px;width:320px;height:35.7px;border-radius:5px;background:#454545"></div><div style="position:absolute;left:1136.2px;top:1729.7px;width:258.8px;height:25.4px;border-radius:10px;background:#232426"></div><div style="position:absolute;left:1224px;top:1733.4px;width:41.5px;height:17.6px;border-radius:9px;background:#a0a0a0"></div><svg style="position:absolute;left:1400px;top:1729.7px;" width="29" height="26" viewBox="0 0 29 26"><g fill="#a0a0a0"><rect x="0" y="0" width="9" height="7"/><rect x="11" y="0" width="18" height="7"/><rect x="0" y="9.2" width="9" height="7"/><rect x="11" y="9.2" width="18" height="7"/><rect x="0" y="18.4" width="9" height="7"/><rect x="11" y="18.4" width="18" height="7"/></g></svg><div style="position:absolute;left:1480px;top:1213px;width:365px;height:168.4px;border-radius:5px;background:#333333"></div><svg style="position:absolute;left:1494px;top:1230px;" width="16" height="12" viewBox="0 0 16 12"><path d="M1 2H15L8 10Z" fill="#b8b8b8"/></svg><div style="position:absolute;left:1485px;top:1264.5px;width:355px;height:2.0px;background:#555555;"></div><div style="position:absolute;left:1485px;top:1275.10px;font-size:22px;line-height:1;color:#c8c8c8;font-weight:normal;white-space:nowrap;transform:scaleX(1.0228);transform-origin:left;-webkit-text-stroke:0.35px #c8c8c8;">Date Modified 01/12/2024 01:42PM</div><div style="position:absolute;left:1485px;top:1300.30px;font-size:22px;line-height:1;color:#c8c8c8;font-weight:normal;white-space:nowrap;transform:scaleX(0.9664);transform-origin:left;-webkit-text-stroke:0.35px #c8c8c8;">Created by</div><div style="position:absolute;left:1485px;top:1325.30px;font-size:22px;line-height:1;color:#c8c8c8;font-weight:normal;white-space:nowrap;transform:scaleX(1.0133);transform-origin:left;-webkit-text-stroke:0.35px #c8c8c8;">Modified by</div><div style="position:absolute;left:1485px;top:1350.60px;font-size:22px;line-height:1;color:#c8c8c8;font-weight:normal;white-space:nowrap;transform:scaleX(0.9618);transform-origin:left;-webkit-text-stroke:0.35px #c8c8c8;">File size</div><div style="position:absolute;left:1839px;top:1350.60px;font-size:22px;line-height:1;color:#c8c8c8;font-weight:normal;white-space:nowrap;transform:translateX(-100%) scaleX(0.9837);transform-origin:right;-webkit-text-stroke:0.35px #c8c8c8;">4.00 KB</div><div style="position:absolute;left:1480px;top:1387.8px;width:365px;height:358.2px;border-radius:5px;background:#333333"></div><svg style="position:absolute;left:1494px;top:1407px;" width="16" height="12" viewBox="0 0 16 12"><path d="M1 2H15L8 10Z" fill="#b8b8b8"/></svg><div style="position:absolute;left:1521.4px;top:1400.30px;font-size:22px;line-height:1;color:#d0d0d0;font-weight:normal;white-space:nowrap;transform:scaleX(0.9953);transform-origin:left;-webkit-text-stroke:0.35px #d0d0d0;">Checkpoints</div><svg style="position:absolute;left:1560px;top:1470px;" width="180" height="190" viewBox="0 0 180 190"><path d="M20.3 156.1 L49.3 150 L49.3 173.1Z" fill="#232323"/><path d="M49.3 23 L138.6 17 L156.1 34 L156.1 151 L141 153.4 L49.3 173.1Z" fill="url(#page)"/><path d="M138.6 17 L156.1 34 L138.6 36.5Z" fill="#c6c6c6"/><g stroke="#6c6c6c" stroke-width="2"><path d="M78.9 80.5L133.1 72.3M78.9 92.7L133.1 84.5M78.9 105L133.1 96.8M78.9 117.2L133.1 109"/></g><path d="M143 135.8 L162.1 154.5 L155.6 155 L158.3 165.4 L154.5 167 L150.6 157.8 L143.5 163.2Z" fill="#c8c8c8"/></svg><div style="position:absolute;left:1662px;top:1692.90px;font-size:22px;line-height:1;color:#c4c4c4;font-weight:normal;white-space:nowrap;transform:translateX(-50%) scaleX(1.0151);transform-origin:center;-webkit-text-stroke:0.35px #c4c4c4;">Location does not support</div><div style="position:absolute;left:1662px;top:1718.30px;font-size:22px;line-height:1;color:#c4c4c4;font-weight:normal;white-space:nowrap;transform:translateX(-50%) scaleX(0.9829);transform-origin:center;-webkit-text-stroke:0.35px #c4c4c4;">Checkpoints.</div><div style="position:absolute;left:1764px;top:4px;width:334px;height:66px;box-sizing:border-box;border:6px solid #84b83a;"></div><div style="position:absolute;left:1931.0px;top:14.92px;font-size:44.8px;line-height:1;color:#fff;font-weight:normal;white-space:nowrap;transform:translateX(-50%) scaleX(0.9103);transform-origin:center;">Application</div><div style="position:absolute;left:304px;top:58px;width:334px;height:66px;box-sizing:border-box;border:6px solid #84b83a;"></div><div style="position:absolute;left:471.0px;top:68.92px;font-size:44.8px;line-height:1;color:#fff;font-weight:normal;white-space:nowrap;transform:translateX(-50%) scaleX(0.8969);transform-origin:center;">Menus</div><div style="position:absolute;left:822px;top:442px;width:334px;height:66px;box-sizing:border-box;border:6px solid #84b83a;"></div><div style="position:absolute;left:989.0px;top:452.92px;font-size:44.8px;line-height:1;color:#fff;font-weight:normal;white-space:nowrap;transform:translateX(-50%) scaleX(0.9165);transform-origin:center;">Viewport</div><div style="position:absolute;left:2124px;top:542px;width:334px;height:66px;box-sizing:border-box;border:6px solid #84b83a;"></div><div style="position:absolute;left:2291.0px;top:552.92px;font-size:44.8px;line-height:1;color:#fff;font-weight:normal;white-space:nowrap;transform:translateX(-50%) scaleX(0.8977);transform-origin:center;">Stage</div><div style="position:absolute;left:2124px;top:1364px;width:334px;height:66px;box-sizing:border-box;border:6px solid #84b83a;"></div><div style="position:absolute;left:2291.0px;top:1374.92px;font-size:44.8px;line-height:1;color:#fff;font-weight:normal;white-space:nowrap;transform:translateX(-50%) scaleX(0.8879);transform-origin:center;">Properties</div><div style="position:absolute;left:802px;top:1438px;width:332px;height:66px;box-sizing:border-box;border:6px solid #84b83a;"></div><div style="position:absolute;left:968.0px;top:1448.92px;font-size:44.8px;line-height:1;color:#fff;font-weight:normal;white-space:nowrap;transform:translateX(-50%) scaleX(0.9171);transform-origin:center;">Content Browser</div><div style="position:absolute;left:16px;top:676px;width:66px;height:331px;box-sizing:border-box;border:6px solid #84b83a;"></div><div style="position:absolute;left:49px;top:841.5px;width:0;height:0;"><div style="position:absolute;left:0;top:0;transform:rotate(-90deg);transform-origin:0 0;"><div style="position:absolute;left:0px;top:-22.68px;font-size:44.8px;line-height:1;color:#fff;font-weight:normal;white-space:nowrap;transform:translateX(-50%) scaleX(0.9215);transform-origin:center;">Toolbar</div></div></div><div style="position:absolute;left:64px;top:1922px;width:334px;height:66px;box-sizing:border-box;border:6px solid #84b83a;"></div><div style="position:absolute;left:231.0px;top:1932.92px;font-size:44.8px;line-height:1;color:#fff;font-weight:normal;white-space:nowrap;transform:translateX(-50%) scaleX(0.8933);transform-origin:center;">USD</div><div style="position:absolute;left:428px;top:1922px;width:334px;height:66px;box-sizing:border-box;border:6px solid #84b83a;"></div><div style="position:absolute;left:595.0px;top:1932.92px;font-size:44.8px;line-height:1;color:#fff;font-weight:normal;white-space:nowrap;transform:translateX(-50%) scaleX(0.8514);transform-origin:center;">RTX</div><div style="position:absolute;left:792px;top:1922px;width:334px;height:66px;box-sizing:border-box;border:6px solid #84b83a;"></div><div style="position:absolute;left:959.0px;top:1932.92px;font-size:44.8px;line-height:1;color:#fff;font-weight:normal;white-space:nowrap;transform:translateX(-50%) scaleX(0.8704);transform-origin:center;">PhysX</div><div style="position:absolute;left:1520px;top:1922px;width:334px;height:66px;box-sizing:border-box;border:6px solid #84b83a;"></div><div style="position:absolute;left:1687.0px;top:1932.92px;font-size:44.8px;line-height:1;color:#fff;font-weight:normal;white-space:nowrap;transform:translateX(-50%) scaleX(0.8692);transform-origin:center;">Omni UI</div><div style="position:absolute;left:1884px;top:1922px;width:334px;height:66px;box-sizing:border-box;border:6px solid #84b83a;"></div><div style="position:absolute;left:2051.0px;top:1932.92px;font-size:44.8px;line-height:1;color:#fff;font-weight:normal;white-space:nowrap;transform:translateX(-50%) scaleX(0.8955);transform-origin:center;">Omni Graph</div><div style="position:absolute;left:2248px;top:1922px;width:334px;height:66px;box-sizing:border-box;border:6px solid #84b83a;"></div><div style="position:absolute;left:2415.0px;top:1932.92px;font-size:44.8px;line-height:1;color:#fff;font-weight:normal;white-space:nowrap;transform:translateX(-50%) scaleX(0.8941);transform-origin:center;">Ext Manager</div><div style="position:absolute;left:417.6px;top:1846.58px;font-size:50.5px;line-height:1;color:#fff;font-weight:normal;white-space:nowrap;transform:scaleX(0.9022);transform-origin:left;">Runtime Extension</div><div style="position:absolute;left:1812.4px;top:1845.67px;font-size:50.5px;line-height:1;color:#fff;font-weight:normal;white-space:nowrap;transform:scaleX(0.9084);transform-origin:left;">Framework Extension</div><div style="position:absolute;left:1153.8px;top:2066.07px;font-size:50.5px;line-height:1;color:#fff;font-weight:normal;white-space:nowrap;transform:scaleX(0.9115);transform-origin:left;">Kit Kernel Package</div></body></html>
